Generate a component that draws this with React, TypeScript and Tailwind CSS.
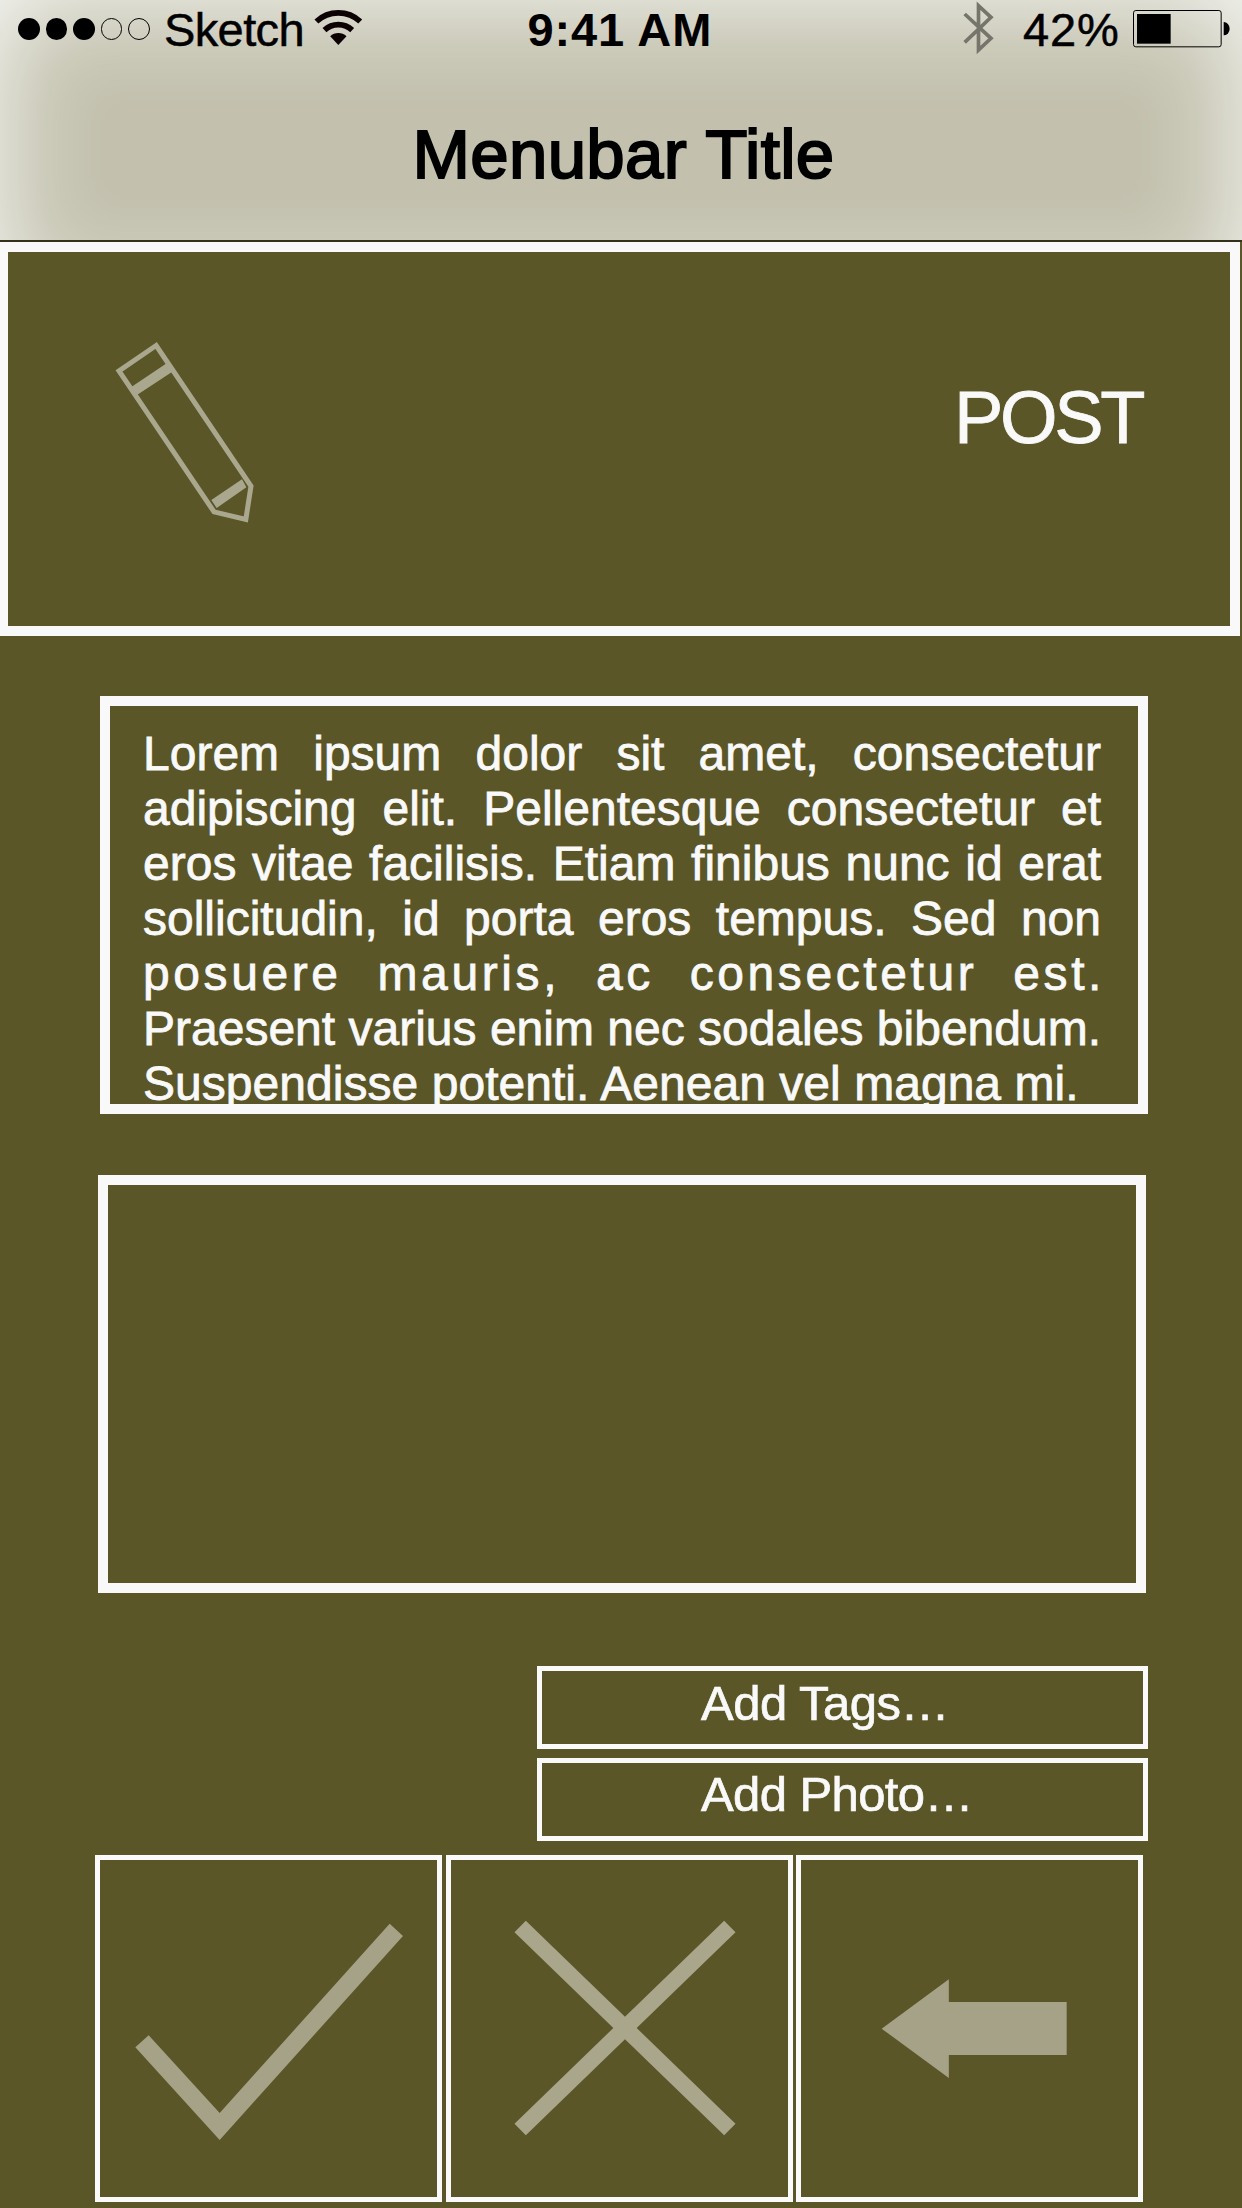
const LINES = [
  'Lorem ipsum dolor sit amet, consectetur',
  'adipiscing elit. Pellentesque consectetur et',
  'eros vitae facilisis. Etiam finibus nunc id erat',
  'sollicitudin, id porta eros tempus. Sed non',
];

function StatusBar() {
  return (
    <div className="relative flex h-[60px] items-start text-[47px] leading-[60px] text-black">
      <div className="ml-[18px] mt-[18px] flex gap-[6px]">
        {[true, true, true, false, false].map((on, i) => (
          <span
            key={i}
            className={
              on
                ? 'size-[21.6px] rounded-full bg-black'
                : 'size-[21.6px] rounded-full border border-black'
            }
          />
        ))}
      </div>
      <span className="ml-[14px] w-[140px] whitespace-nowrap tracking-[-0.6px] [-webkit-text-stroke:0.5px_black]">Sketch</span>
      <svg className="ml-[10.5px] mt-[9px] h-[37px] w-[49px]" viewBox="944 27 147 111">
        <g fill="none" stroke="#0c0204" strokeWidth="17">
          <path d="M951.2 64.5A96.5 96.5 0 0 1 1082.8 64.5" />
          <path d="M975.4 90.4A61 61 0 0 1 1058.6 90.4" />
        </g>
        <path d="M1017 135L992.5 108.7A36 36 0 0 1 1041.5 108.7Z" fill="#0c0204" />
      </svg>
      <span className="ml-[164px] w-[190px] whitespace-nowrap font-bold tracking-[0.9px]">9:41 AM</span>
      <svg className="ml-[246px] mt-px h-[54px] w-[32px]" viewBox="312 3 96 162">
        <path
          d="M317 42L396 115L358.500 150V17L396 52L317 127"
          fill="none"
          stroke="#75756c"
          strokeWidth="11"
        />
      </svg>
      <span className="ml-[27.5px] w-[100px] whitespace-nowrap tracking-[0.9px] [-webkit-text-stroke:0.5px_black]">42%</span>
      <svg className="ml-[9px] mt-[9px] h-[40px] w-[100px]" viewBox="817 27 300 120">
        <rect x="821.500" y="31.500" width="263" height="109" rx="7" fill="none" stroke="#000" strokeWidth="3" />
        <rect x="832" y="42" width="101" height="89" />
        <path d="M1092 66A18 20 0 0 1 1092 106Z" />
      </svg>
    </div>
  );
}

export default function App() {
  return (
    <div className="h-[2208px] w-[1242px] overflow-hidden bg-[#5b5627] font-['Liberation_Sans',Arial,sans-serif] text-[#f9f9f9]">
      <header className="relative h-[242px] overflow-hidden border-b-2 border-[#34311a] bg-[#c3c1ae]">
        <div className="absolute inset-x-0 top-0 h-[300px] shadow-[inset_0_0_100px_#fafbf9]" />
        <StatusBar />
        <h1 className="relative mt-[55px] pl-[5px] text-center text-[69px] leading-[80px] tracking-[0.3px] text-black [-webkit-text-stroke:2px_black]">
          Menubar Title
        </h1>
      </header>

      <section className="-ml-[2px] flex h-[394px] w-[1242px] items-start justify-between border-[10px] border-[#f9f9f9]">
        <svg className="ml-[72px] mt-[68px] size-[220px]" viewBox="0 0 660 660">
          <path
            d="M228.500 76.500L117 152.500L402 575.500L497.500 598L513 498.500Z"
            fill="none"
            stroke="#aaa78f"
            strokeWidth="15"
          />
          <path d="M155 200L260 130L277 155L172 224ZM394 540L486 478L499 502L410 564Z" fill="#aaa78f" />
        </svg>
        <span className="mr-[88px] mt-[124px] text-[74px] leading-[84px] tracking-[-3.4px] [-webkit-text-stroke:0.8px_#f9f9f9]">
          POST
        </span>
      </section>

      <section className="ml-[100px] mt-[60px] h-[418px] w-[1048px] overflow-hidden border-[10px] border-[#f9f9f9] pl-[33px] pr-[37px] pt-[20px] text-[48px] leading-[55px] [-webkit-text-stroke:0.8px_#f9f9f9]">
        {LINES.map((line) => (
          <p key={line} className="whitespace-nowrap [text-align-last:justify]">{line}</p>
        ))}
        <p className="-mr-[4px] whitespace-nowrap tracking-[3.6px] [text-align-last:justify]">
          posuere mauris, ac consectetur est.
        </p>
        <p className="whitespace-nowrap [text-align-last:justify]">Praesent varius enim nec sodales bibendum.</p>
        <p className="whitespace-nowrap tracking-[0.04px]">Suspendisse potenti. Aenean vel magna mi.</p>
      </section>

      <section className="ml-[98px] mt-[61px] h-[418px] w-[1048px] border-[10px] border-[#f9f9f9]" />

      <div className="ml-[537px] mt-[73px] flex w-[611px] flex-col gap-[9px] text-[49px] leading-[56px] [-webkit-text-stroke:0.7px_#f9f9f9]">
        <div className="h-[83px] border-[5px] border-[#fafafa] pl-[159px] pt-[4px] tracking-[-0.5px]">Add Tags…</div>
        <div className="h-[83px] border-[5px] border-[#fafafa] pl-[159px] pt-[3px] tracking-[-0.6px]">Add Photo…</div>
      </div>

      <div className="ml-[95px] mt-[14px] flex gap-[3.5px]">
        <div className="size-[347px] border-[5px] border-[#fafafa]">
          <svg className="size-full" viewBox="60 60 1011 1011">
            <path d="M166 622L206 586L419 819L929 251L969 288L419 900Z" fill="#a5a287" />
          </svg>
        </div>
        <div className="size-[347px] border-[5px] border-[#fafafa]">
          <svg className="size-full" viewBox="31.5 60 1011 1011">
            <path
              d="M222 277L256 242L553.500 530L851 242L885 277L588.500 564L885 851L851 885.500L553.500 598L256 885.500L222 851L518.500 564Z"
              fill="#a9a68c"
            />
          </svg>
        </div>
        <div className="size-[347px] border-[5px] border-[#fafafa]">
          <svg className="size-full" viewBox="63 60 1011 1011">
            <path d="M305 566L506.500 418V486H860V645H506.500V714Z" fill="#a5a287" />
          </svg>
        </div>
      </div>
    </div>
  );
}
